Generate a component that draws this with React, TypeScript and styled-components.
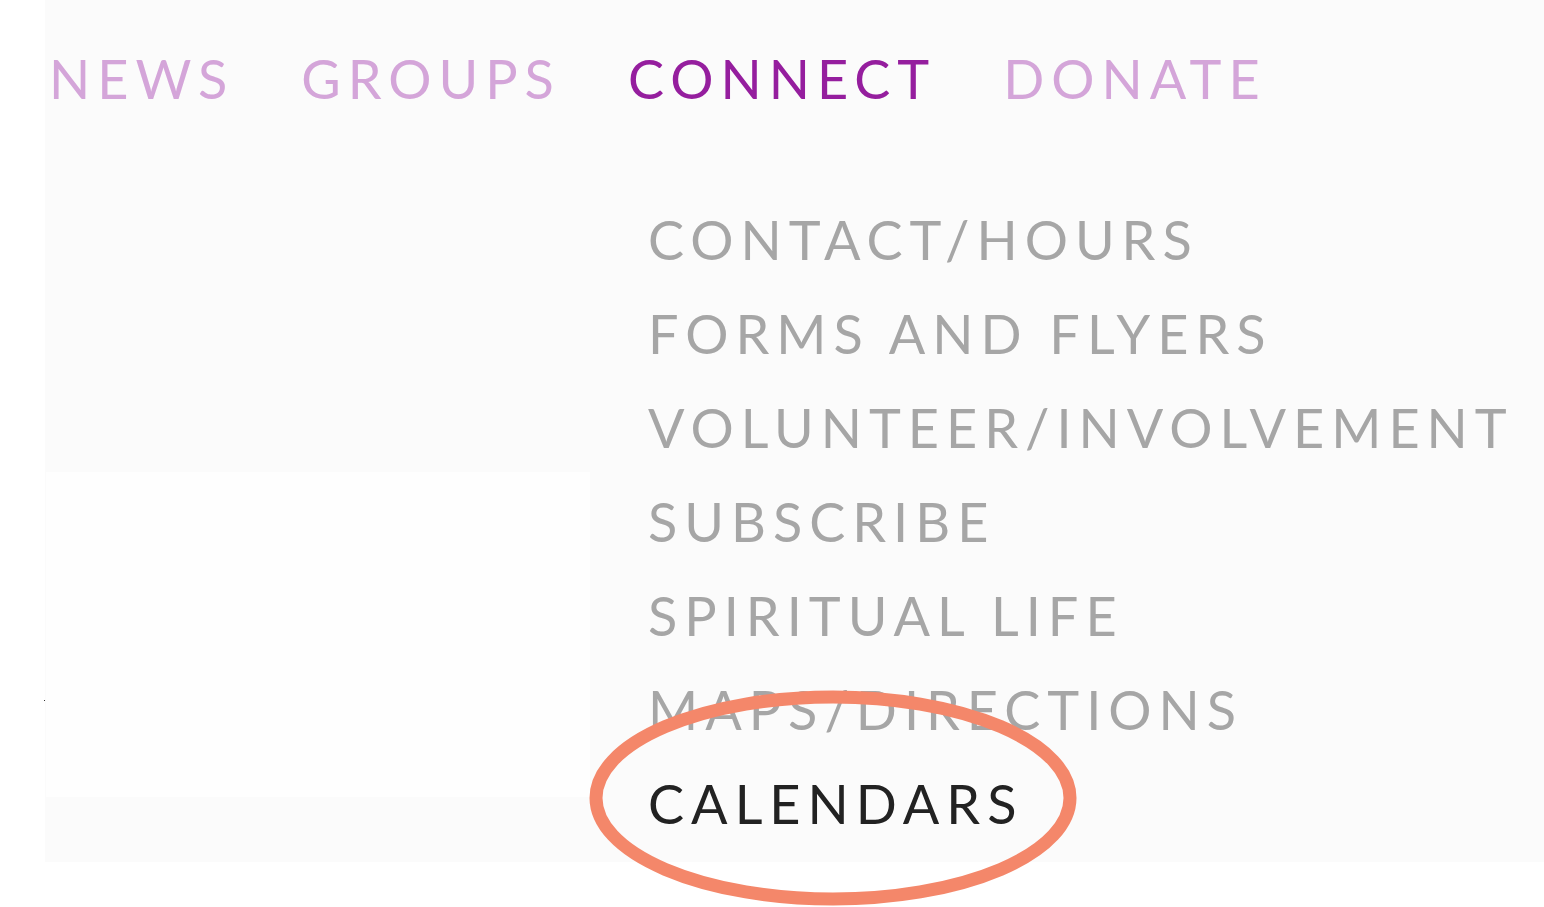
import styled, { createGlobalStyle } from 'styled-components'

const GlobalStyle = createGlobalStyle`
  html, body {
    margin: 0;
    padding: 0;
    background: #ffffff;
  }
  body {
    font-family: Lato, 'Noto Sans', sans-serif;
  }
`

const Page = styled.div`
  width: 1544px;
  height: 907px;
  overflow: hidden;
  background: #ffffff;
`

const Panel = styled.div`
  position: relative;
  margin-left: 45px;
  width: 1499px;
  height: 862px;
  background: #fbfbfb;
  display: flex;
  flex-direction: column;
`

const Nav = styled.nav`
  display: flex;
  align-items: center;
  padding: 39px 0 0 4px;
  height: 80px;
`

const NavItem = styled.a<{ active?: boolean }>`
  font-size: 54px;
  line-height: 80px;
  letter-spacing: 7px;
  text-transform: uppercase;
  color: ${({ active }) => (active ? '#951e9e' : '#d4a5d9')};
  text-decoration: none;
  margin-right: 67px;
`

const Body = styled.div`
  display: flex;
  flex: 1;
`

const Aside = styled.div`
  position: relative;
  width: 545px;
  padding-top: 353px;
  box-sizing: border-box;

  &::before {
    content: '';
    position: absolute;
    left: -1px;
    top: 581px;
    width: 1px;
    height: 1px;
    background: #333;
  }
`

const Blank = styled.div`
  margin-left: 1px;
  width: 544px;
  height: 325px;
  background: #fefefe;
`

const Submenu = styled.ul`
  list-style: none;
  margin: 74px 0 0 58px;
  padding: 0;
  display: flex;
  flex-direction: column;
`

const SubItem = styled.li<{ current?: boolean }>`
  font-size: 54px;
  line-height: 94px;
  letter-spacing: 7px;
  white-space: nowrap;
  color: ${({ current }) => (current ? '#222222' : '#a6a6a6')};
`

const Circle = styled.svg`
  position: absolute;
  left: 545px;
  top: 690px;
  overflow: visible;
  pointer-events: none;
`

const navItems = ['News', 'Groups', 'Connect', 'Donate']

const subItems = [
  'CONTACT/HOURS',
  'FORMS AND FLYERS',
  'VOLUNTEER/INVOLVEMENT',
  'SUBSCRIBE',
  'SPIRITUAL LIFE',
  'MAPS/DIRECTIONS',
  'CALENDARS',
]

export default function App() {
  return (
    <Page>
      <GlobalStyle />
      <Panel>
        <Nav>
          {navItems.map((item) => (
            <NavItem key={item} active={item === 'Connect'}>
              {item}
            </NavItem>
          ))}
        </Nav>
        <Body>
          <Aside>
            <Blank />
          </Aside>
          <Submenu>
            {subItems.map((item) => (
              <SubItem key={item} current={item === 'CALENDARS'}>
                {item}
              </SubItem>
            ))}
          </Submenu>
        </Body>
        <Circle width="500" height="220" viewBox="0 0 500 220">
          <ellipse cx="243" cy="108" rx="237" ry="101" fill="none" stroke="#f4876a" strokeWidth="13" />
        </Circle>
      </Panel>
    </Page>
  )
}
